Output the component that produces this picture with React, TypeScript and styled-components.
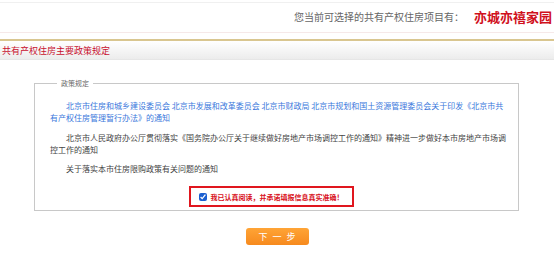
import React from 'react'
import styled, { createGlobalStyle } from 'styled-components'

const GlobalStyle = createGlobalStyle`
  html, body {
    margin: 0;
    padding: 0;
    background: #ffffff;
  }
  body {
    font-family: "Noto Sans CJK SC", "Noto Sans", sans-serif;
    color: #333333;
  }
`

const policies = [
  {
    link: true,
    text:
      '北京市住房和城乡建设委员会 北京市发展和改革委员会 北京市财政局 北京市规划和国土资源管理委员会关于印发《北京市共有产权住房管理暂行办法》的通知',
  },
  {
    link: false,
    text:
      '北京市人民政府办公厅贯彻落实《国务院办公厅关于继续做好房地产市场调控工作的通知》精神进一步做好本市房地产市场调控工作的通知',
  },
  { link: false, text: '关于落实本市住房限购政策有关问题的通知' },
]

export default function App() {
  return (
    <Page>
      <GlobalStyle />
      <TopBar>
        <ProjectLabel>您当前可选择的共有产权住房项目有：</ProjectLabel>
        <ProjectName>亦城亦禧家园</ProjectName>
      </TopBar>
      <SectionBar>共有产权住房主要政策规定</SectionBar>
      <PolicyBox>
        <Legend>政策规定</Legend>
        {policies.map((p) => (
          <Policy key={p.text} link={p.link}>
            {p.text}
          </Policy>
        ))}
        <AgreeRow>
          <AgreeBox>
            <Check type="checkbox" defaultChecked />
            <AgreeText>我已认真阅读，并承诺填报信息真实准确！</AgreeText>
          </AgreeBox>
        </AgreeRow>
      </PolicyBox>
      <Actions>
        <NextButton>下 一 步</NextButton>
      </Actions>
    </Page>
  )
}

const Page = styled.div`
  width: 554px;
  height: 264px;
  overflow: hidden;
`
const TopBar = styled.div`
  margin-top: 2px;
  height: 31px;
  border-top: 1px solid #f0f0f0;
  border-bottom: 1px solid #f6e9e9;
  display: flex;
  justify-content: flex-end;
  align-items: center;
  padding: 0 2px 2px 0;
  box-sizing: border-box;
`
const ProjectLabel = styled.span`
  font-size: 10px;
  color: #666666;
  margin-right: 10px;
`
const ProjectName = styled.span`
  font-size: 13px;
  font-weight: bold;
  color: #d0101c;
`
const SectionBar = styled.div`
  margin-top: 6px;
  height: 21px;
  border-top: 2px solid #d9c690;
  border-bottom: 1px solid #e6e6e6;
  background: linear-gradient(#ffffff, #ececec);
  box-sizing: border-box;
  display: flex;
  align-items: center;
  padding-left: 2px;
  font-size: 9px;
  color: #c8102e;
`
const PolicyBox = styled.fieldset`
  margin: 18px 35px 0 34px;
  padding: 12px 9px 0 15px;
  border: 1px solid #c8c8c8;
  height: 133px;
  box-sizing: border-box;
`
const Legend = styled.legend`
  font-size: 7px;
  color: #666666;
  padding: 0 4px;
  margin-left: 7px;
`
const Policy = styled.p<{ link?: boolean }>`
  margin: 0 0 7px;
  font-size: 8px;
  line-height: 12px;
  text-indent: 2em;
  color: ${({ link }) => (link ? '#3b78dc' : '#444444')};

  &:first-of-type {
    margin-bottom: 8px;
  }
`
const AgreeRow = styled.div`
  display: flex;
  justify-content: center;
  padding-right: 17px;
  margin-top: 11px;
`
const AgreeBox = styled.label`
  display: flex;
  align-items: center;
  height: 21px;
  box-sizing: border-box;
  border: 2px solid #e0161e;
  padding: 0 8px;
`
const Check = styled.input`
  width: 8px;
  height: 8px;
  margin: 0 4px 0 0;
  accent-color: #1a5fd0;
`
const AgreeText = styled.span`
  font-size: 7px;
  font-weight: bold;
  color: #d8101c;
`
const Actions = styled.div`
  display: flex;
  justify-content: center;
  margin-top: 17px;
`
const NextButton = styled.button`
  width: 63px;
  height: 17px;
  border: none;
  border-radius: 3px;
  background: linear-gradient(#ffa436, #f68a1e);
  color: #ffffff;
  font-family: "Noto Sans CJK SC", sans-serif;
  font-size: 9px;
  letter-spacing: 1.5px;
  padding: 0 0 0 1.5px;
`
